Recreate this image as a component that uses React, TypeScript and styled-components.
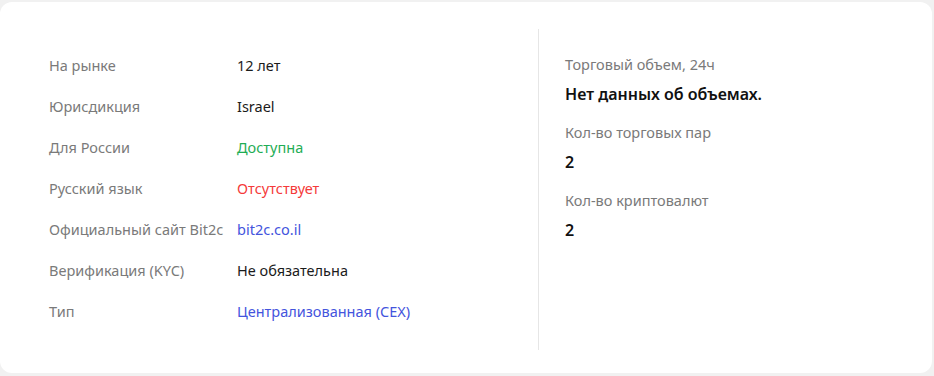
import styled, { createGlobalStyle } from "styled-components";

const GlobalStyle = createGlobalStyle`
  html, body {
    margin: 0;
    padding: 0;
    background: #f1f1f1;
  }
  body {
    font-family: "Noto Sans", "Open Sans", Arial, sans-serif;
  }
`;

const Card = styled.section`
  box-sizing: border-box;
  width: 932px;
  height: 371px;
  margin: 2px 2px 3px 0;
  background: #ffffff;
  border-radius: 12px;
  display: flex;
  padding: 27px 0 23px 0;
`;

const InfoTable = styled.div`
  width: 538px;
  box-sizing: border-box;
  padding: 15px 0 0 49px;
  display: flex;
  flex-direction: column;
`;

const Row = styled.div`
  display: grid;
  grid-template-columns: 188px 1fr;
  height: 41px;
  align-items: center;
  font-size: 14.5px;
  line-height: 20px;
`;

const Label = styled.span`
  color: #7a7a7a;
`;

type Tone = "default" | "green" | "red" | "blue";

const toneColors: Record<Tone, string> = {
  default: "#1b1b1b",
  green: "#1fad55",
  red: "#f53a3a",
  blue: "#4454dd",
};

const Value = styled.span<{ $tone: Tone }>`
  color: ${(p) => toneColors[p.$tone]};
`;

const Divider = styled.div`
  width: 1px;
  background: #e6e6e6;
`;

const Stats = styled.div`
  padding: 25px 0 0 26px;
  display: flex;
  flex-direction: column;
`;

const StatLabel = styled.div`
  color: #7a7a7a;
  font-size: 14.5px;
  line-height: 20px;
  margin-bottom: 10px;
`;

const StatValue = styled.div`
  color: #111;
  font-size: 16px;
  font-weight: 600;
  line-height: 20px;
  margin-bottom: 18px;
`;

const rows: { label: string; value: string; tone: Tone }[] = [
  { label: "На рынке", value: "12 лет", tone: "default" },
  { label: "Юрисдикция", value: "Israel", tone: "default" },
  { label: "Для России", value: "Доступна", tone: "green" },
  { label: "Русский язык", value: "Отсутствует", tone: "red" },
  { label: "Официальный сайт Bit2c", value: "bit2c.co.il", tone: "blue" },
  { label: "Верификация (KYC)", value: "Не обязательна", tone: "default" },
  { label: "Тип", value: "Централизованная (CEX)", tone: "blue" },
];

const stats = [
  { label: "Торговый объем, 24ч", value: "Нет данных об объемах." },
  { label: "Кол-во торговых пар", value: "2" },
  { label: "Кол-во криптовалют", value: "2" },
];

function App() {
  return (
    <>
      <GlobalStyle />
      <Card>
        <InfoTable>
          {rows.map((r) => (
            <Row key={r.label}>
              <Label>{r.label}</Label>
              <Value $tone={r.tone}>{r.value}</Value>
            </Row>
          ))}
        </InfoTable>
        <Divider />
        <Stats>
          {stats.map((s) => (
            <div key={s.label}>
              <StatLabel>{s.label}</StatLabel>
              <StatValue>{s.value}</StatValue>
            </div>
          ))}
        </Stats>
      </Card>
    </>
  );
}

export default App;
